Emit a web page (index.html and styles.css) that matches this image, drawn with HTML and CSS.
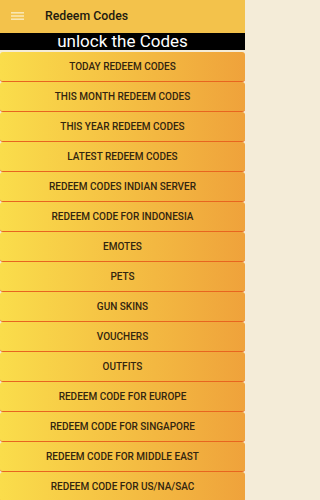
FILE: index.html
```html
<!DOCTYPE html>
<html>
<head>
<meta charset="utf-8">
<link rel="stylesheet" href="styles.css">
</head>
<body>
<div class="app">
  <header class="toolbar">
    <svg class="menu" width="13" height="8" viewBox="0 0 13 8">
      <rect x="0" y="0" width="13" height="1.6" fill="#f9e7b2"/>
      <rect x="0" y="3.2" width="13" height="1.6" fill="#f9e7b2"/>
      <rect x="0" y="6.4" width="13" height="1.6" fill="#f9e7b2"/>
    </svg>
    <span class="title">Redeem Codes</span>
  </header>
  <div class="banner">unlock the Codes</div>
  <div class="list">
    <div class="btn">TODAY REDEEM CODES</div>
    <div class="btn">THIS MONTH REDEEM CODES</div>
    <div class="btn">THIS YEAR REDEEM CODES</div>
    <div class="btn">LATEST REDEEM CODES</div>
    <div class="btn">REDEEM CODES INDIAN SERVER</div>
    <div class="btn">REDEEM CODE FOR INDONESIA</div>
    <div class="btn">EMOTES</div>
    <div class="btn">PETS</div>
    <div class="btn">GUN SKINS</div>
    <div class="btn">VOUCHERS</div>
    <div class="btn">OUTFITS</div>
    <div class="btn">REDEEM CODE FOR EUROPE</div>
    <div class="btn">REDEEM CODE FOR SINGAPORE</div>
    <div class="btn">REDEEM CODE FOR MIDDLE EAST</div>
    <div class="btn">REDEEM CODE FOR US/NA/SAC</div>
  </div>
</div>
</body>
</html>
```
FILE: styles.css
```css
html, body {
  margin: 0;
  padding: 0;
}
body {
  width: 245px;
  height: 500px;
  overflow: hidden;
  background: #f4ecd8;
  font-family: Roboto, "Liberation Sans", sans-serif;
}
.toolbar {
  height: 33px;
  background: #f3c24b;
  display: flex;
  align-items: center;
  padding-left: 11px;
  box-sizing: border-box;
}
.menu {
  display: block;
  margin-top: -2px;
}
.title {
  margin-left: 21px;
  font-size: 12.3px;
  font-weight: 500;
  color: #1e1a10;
  margin-top: -1px;
}
.banner {
  height: 17px;
  background: #000;
  color: #fff;
  font-size: 17px;
  line-height: 17px;
  text-align: center;
}
.list {
  display: flex;
  flex-direction: column;
  padding-top: 2px;
}
.btn {
  height: 29px;
  border-bottom: 1px solid #e8651f;
  border-radius: 3px;
  background: linear-gradient(to right, #fadd4b, #efa23b);
  display: flex;
  align-items: center;
  justify-content: center;
  font-size: 10px;
  font-weight: 500;
  color: #33250f;
}
```
